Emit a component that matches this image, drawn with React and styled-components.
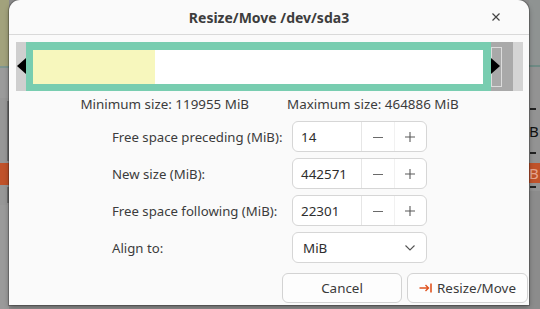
import React from 'react';
import styled, { createGlobalStyle } from 'styled-components';

const GlobalStyle = createGlobalStyle`
  html, body {
    margin: 0;
    padding: 0;
    background: #8d8d8d;
  }
  body {
    font-family: 'Noto Sans', 'DejaVu Sans', sans-serif;
  }
`;

const Screen = styled.div`
  display: flex;
  width: 540px;
  height: 309px;
  overflow: hidden;
  background: #8d8d8d;
`;

const Strip = styled.div`
  display: flex;
  flex-direction: column;
  width: ${(p) => p.$width}px;
  flex-shrink: 0;
`;

const StripBlock = styled.div`
  height: ${(p) => p.$h}px;
  flex-shrink: 0;
  background: ${(p) => p.$bg};
  display: flex;
  align-items: center;
  font-size: 15px;
  color: ${(p) => p.$color || '#111'};
  overflow: hidden;
`;

const Tick = styled.div`
  width: ${(p) => p.$w}px;
  height: ${(p) => p.$h}px;
  background: ${(p) => p.$bg};
  margin-left: ${(p) => p.$ml || 0}px;
`;

const Dialog = styled.div`
  width: 520px;
  height: 305px;
  flex-shrink: 0;
  background: #fafafa;
  border-radius: 11px 11px 0 0;
  box-shadow: 0 0 0 1px rgba(0, 0, 0, 0.22), 0 2px 5px rgba(0, 0, 0, 0.35);
  display: flex;
  flex-direction: column;
  position: relative;
  z-index: 1;
`;

const Header = styled.div`
  height: 34px;
  flex-shrink: 0;
  display: grid;
  grid-template-columns: 1fr auto 1fr;
  align-items: center;
  border-bottom: 1px solid #d9d9d9;
`;

const Title = styled.div`
  grid-column: 2;
  font-size: 14px;
  font-weight: 700;
  color: #3d3d3d;
  padding-top: 1px;
`;

const CloseButton = styled.div`
  grid-column: 3;
  justify-self: end;
  margin-right: 28px;
  width: 10px;
  height: 10px;
  display: flex;
`;

const Body = styled.div`
  display: flex;
  flex-direction: column;
  padding: 7px 6px 0 7px;
  flex: 1;
`;

const Frame = styled.div`
  position: relative;
  display: flex;
  height: 49px;
  background: #a9a9a9;
`;

const FrameEdge = styled.div`
  width: ${(p) => p.$w}px;
  flex-shrink: 0;
  background: ${(p) => p.$bg};
`;

const Partition = styled.div`
  width: 465px;
  flex-shrink: 0;
  background: #78cdb0;
  padding: 8px 8px 7px 7px;
  box-sizing: border-box;
  display: flex;
`;

const PartitionInner = styled.div`
  flex: 1;
  background: #ffffff;
  display: flex;
`;

const Used = styled.div`
  background: #f7f7bd;
  height: 100%;
`;

const Handle = styled.div`
  position: absolute;
  top: 16px;
  width: 0;
  height: 0;
  border-top: 8px solid transparent;
  border-bottom: 8px solid transparent;
  ${(p) =>
    p.$side === 'left'
      ? `left: 1px; border-right: 9px solid #000;`
      : `left: 475px; border-left: 9px solid #000;`}
`;

const HandleBox = styled.div`
  position: absolute;
  left: 475px;
  top: 5px;
  width: 9px;
  height: 38px;
  border: 1px solid #dcdcdc;
`;

const SizeRow = styled.div`
  display: flex;
  justify-content: center;
  gap: 38px;
  margin-top: 3px;
  height: 20px;
  align-items: center;
  font-size: 13.4px;
  color: #3c3c3c;
`;

const Form = styled.div`
  display: grid;
  grid-template-columns: 173px 135px;
  column-gap: 7px;
  row-gap: 6px;
  justify-content: center;
  align-items: center;
  margin-top: 7px;
`;

const Label = styled.div`
  font-size: 13.2px;
  color: #3c3c3c;
  white-space: nowrap;
`;

const Field = styled.div`
  height: 31px;
  box-sizing: border-box;
  border: 1px solid #d6d6d6;
  border-radius: 6px;
  background: #ffffff;
  display: flex;
  overflow: hidden;
`;

const Entry = styled.div`
  width: 69px;
  flex-shrink: 0;
  border-right: 1px solid #e6e6e6;
  display: flex;
  align-items: center;
  padding-left: 8px;
  box-sizing: border-box;
  font-size: 13.4px;
  color: #2e2e2e;
`;

const StepButton = styled.div`
  flex: 1;
  display: flex;
  align-items: center;
  justify-content: center;
  border-right: ${(p) => (p.$divider ? '1px solid #f1f1f1' : 'none')};
`;

const SelectField = styled(Field)`
  align-items: center;
  justify-content: space-between;
  padding: 0 10px;
  font-size: 13.4px;
  color: #2e2e2e;
`;

const Actions = styled.div`
  display: flex;
  justify-content: flex-end;
  gap: 5px;
  margin-top: auto;
  margin-bottom: 2px;
  margin-right: -5px;
`;

const Button = styled.div`
  width: ${(p) => p.$w}px;
  height: 30px;
  box-sizing: border-box;
  border: 1px solid #d3d3d3;
  border-radius: 6px;
  background: #fdfdfd;
  display: flex;
  align-items: center;
  justify-content: center;
  gap: 4px;
  font-size: 13.4px;
  color: #3a3a3a;
`;

const Minus = () => (
  <svg width="12" height="12" viewBox="0 0 12 12">
    <path d="M1 6.5h10" stroke="#6a6a6a" strokeWidth="1.1" />
  </svg>
);

const Plus = () => (
  <svg width="12" height="12" viewBox="0 0 12 12">
    <path d="M1 6h10M6 1v10" stroke="#5a5a5a" strokeWidth="1.1" />
  </svg>
);

const SpinField = ({ value }) => (
  <Field>
    <Entry>{value}</Entry>
    <StepButton $divider>
      <Minus />
    </StepButton>
    <StepButton>
      <Plus />
    </StepButton>
  </Field>
);

const rows = [
  { label: 'Free space preceding (MiB):', value: '14' },
  { label: 'New size (MiB):', value: '442571' },
  { label: 'Free space following (MiB):', value: '22301' },
];

export default function App() {
  return (
    <>
      <GlobalStyle />
      <Screen>
        <Strip $width={9}>
          <StripBlock $h={66} $bg="#a2a27c" />
          <StripBlock $h={2} $bg="#7e9690" />
          <StripBlock $h={30} $bg="#9b9b9b" />
          <StripBlock $h={65} $bg="#979797">
            <Tick $w={2} $h={60} $bg="#6f6f6f" $ml={7} />
          </StripBlock>
          <StripBlock $h={22} $bg="#c0522a" />
          <StripBlock $h={20} $bg="#979797">
            <Tick $w={2} $h={16} $bg="#6f6f6f" $ml={7} />
          </StripBlock>
          <StripBlock $h={104} $bg="#9a9a9a" />
        </Strip>
        <Dialog>
          <Header>
            <Title>Resize/Move /dev/sda3</Title>
            <CloseButton>
              <svg width="10" height="10" viewBox="0 0 10 10">
                <path d="M1.5 1.5l7 7M8.5 1.5l-7 7" stroke="#444" strokeWidth="1.2" />
              </svg>
            </CloseButton>
          </Header>
          <Body>
            <Frame>
              <FrameEdge $w={10} $bg="#cfcfcf" />
              <Partition>
                <PartitionInner>
                  <Used style={{ width: '27%' }} />
                </PartitionInner>
              </Partition>
              <FrameEdge $w={22} $bg="#a9a9a9" />
              <FrameEdge $w={10} $bg="#d4d4d4" />
              <HandleBox />
              <Handle $side="left" />
              <Handle $side="right" />
            </Frame>
            <SizeRow>
              <span>Minimum size: 119955 MiB</span>
              <span>Maximum size: 464886 MiB</span>
            </SizeRow>
            <Form>
              {rows.map((row) => (
                <React.Fragment key={row.label}>
                  <Label>{row.label}</Label>
                  <SpinField value={row.value} />
                </React.Fragment>
              ))}
              <Label>Align to:</Label>
              <SelectField>
                <span>MiB</span>
                <svg width="12" height="8" viewBox="0 0 12 8">
                  <path d="M1.5 1.5L6 6l4.5-4.5" fill="none" stroke="#555" strokeWidth="1.1" />
                </svg>
              </SelectField>
            </Form>
            <Actions>
              <Button $w={120}>Cancel</Button>
              <Button $w={121}>
                <svg width="14" height="10" viewBox="0 0 14 10">
                  <path d="M0.5 5h9M6.5 2l3 3-3 3" fill="none" stroke="#e0531f" strokeWidth="1.4" />
                  <path d="M12 0.5v9" stroke="#e0531f" strokeWidth="1.6" />
                </svg>
                Resize/Move
              </Button>
            </Actions>
          </Body>
        </Dialog>
        <Strip $width={11}>
          <StripBlock $h={65} $bg="#8f9392" />
          <StripBlock $h={2} $bg="#6e8a84" />
          <StripBlock $h={40} $bg="#939393" />
          <StripBlock $h={4} $bg="#939393">
            <Tick $w={6} $h={2} $bg="#222" $ml={1} />
          </StripBlock>
          <StripBlock $h={40} $bg="#939393">B</StripBlock>
          <StripBlock $h={4} $bg="#939393">
            <Tick $w={6} $h={2} $bg="#222" $ml={1} />
          </StripBlock>
          <StripBlock $h={8} $bg="#939393" />
          <StripBlock $h={20} $bg="#c0522a" $color="#e6a58f">B</StripBlock>
          <StripBlock $h={8} $bg="#939393">
            <Tick $w={6} $h={2} $bg="#222" $ml={1} />
          </StripBlock>
          <StripBlock $h={118} $bg="#8c8c8c" />
        </Strip>
      </Screen>
    </>
  );
}
